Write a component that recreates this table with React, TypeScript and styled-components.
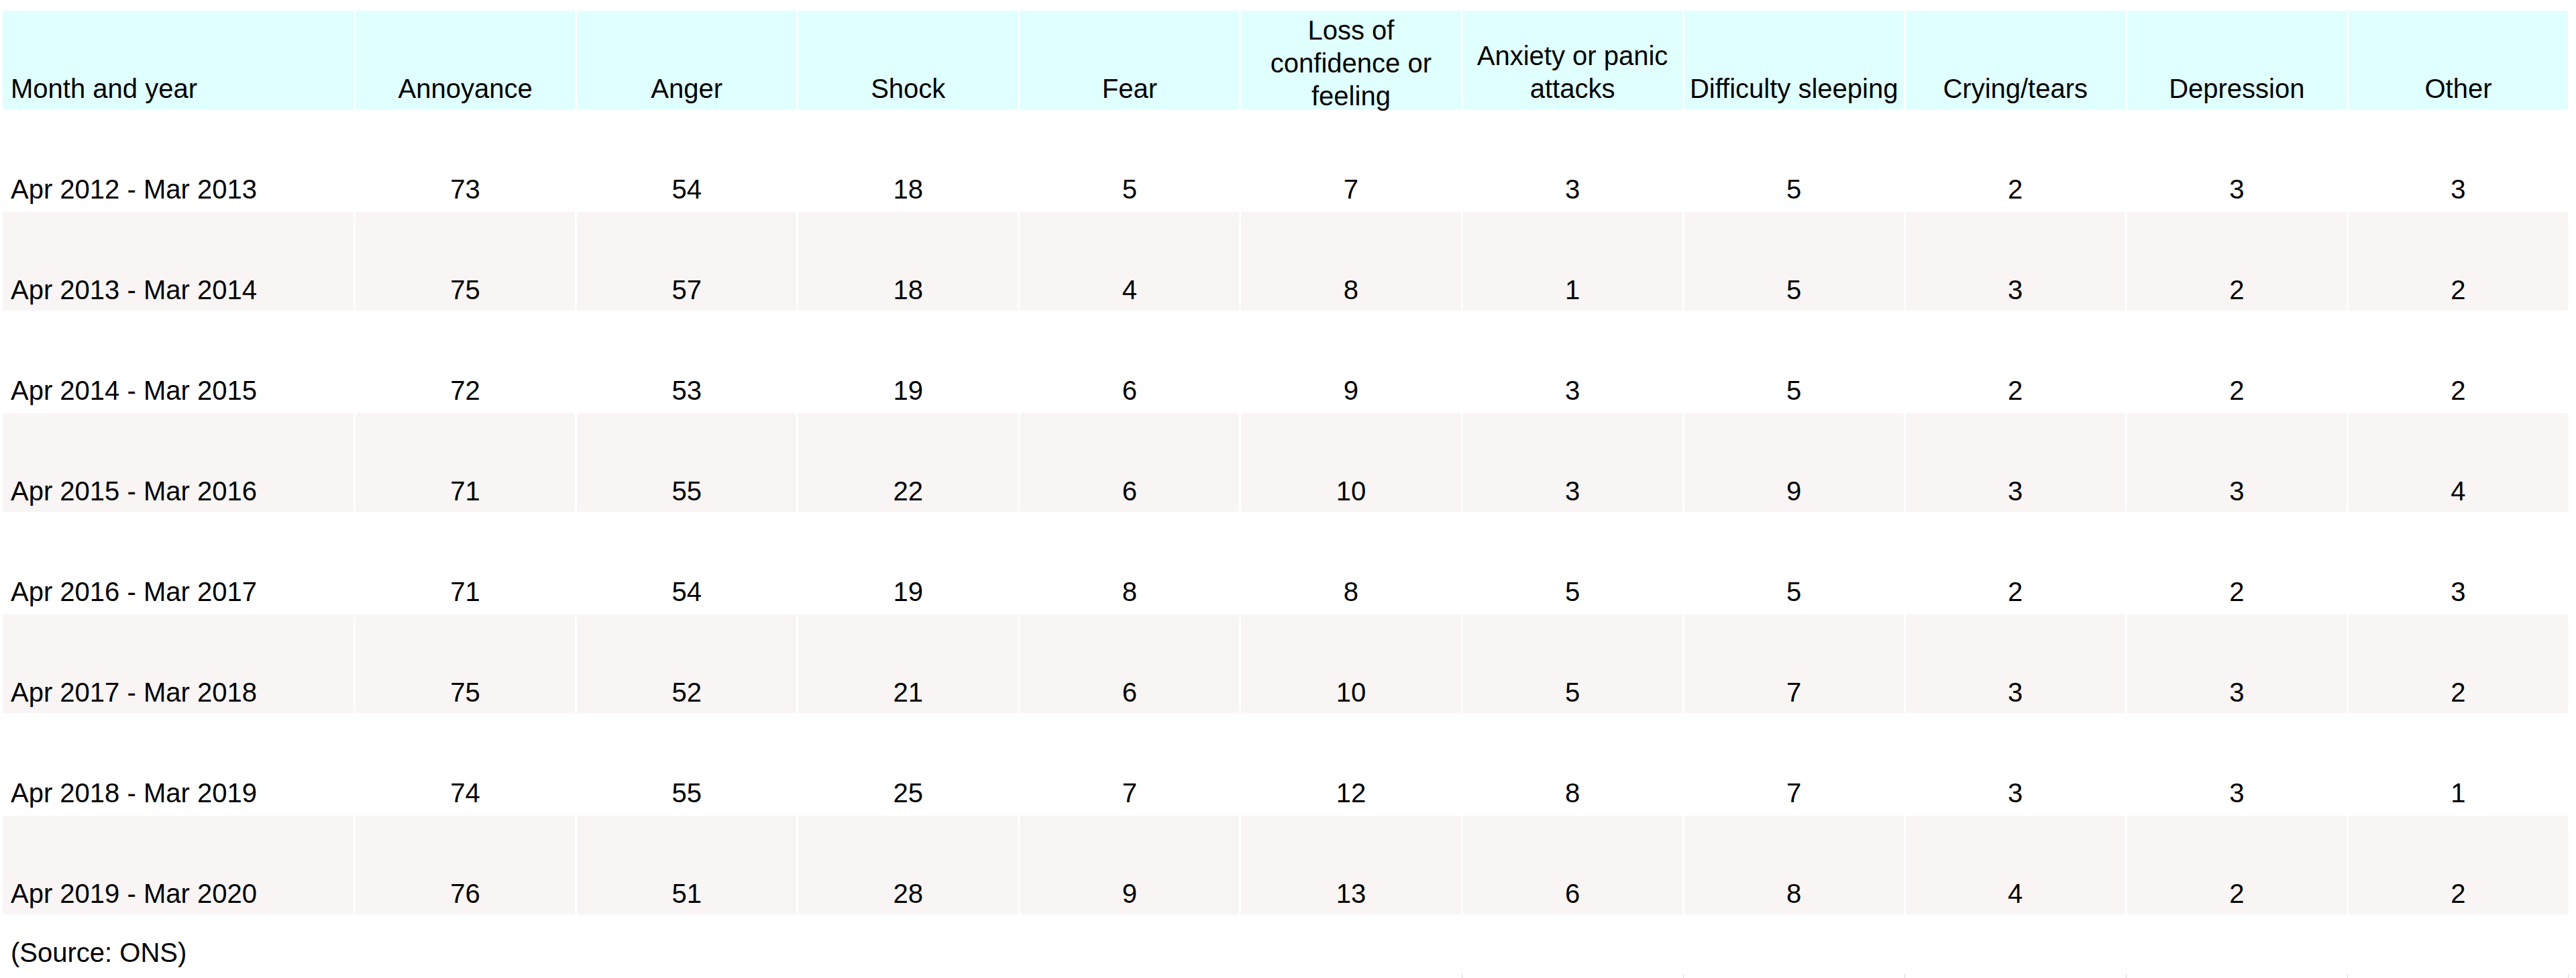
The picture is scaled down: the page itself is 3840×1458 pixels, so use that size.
import styled, { createGlobalStyle } from "styled-components";

const GlobalStyle = createGlobalStyle`
	body {
		margin: 0;
		background: #ffffff;
		color: #000000;
		font-family: "Liberation Sans", Arial, sans-serif;
	}
`;

const columns = [
	"Annoyance",
	"Anger",
	"Shock",
	"Fear",
	"Loss of confidence or feeling",
	"Anxiety or panic attacks",
	"Difficulty sleeping",
	"Crying/tears",
	"Depression",
	"Other",
];

const rows: { period: string; values: number[] }[] = [
	{ period: "Apr 2012 - Mar 2013", values: [73, 54, 18, 5, 7, 3, 5, 2, 3, 3] },
	{ period: "Apr 2013 - Mar 2014", values: [75, 57, 18, 4, 8, 1, 5, 3, 2, 2] },
	{ period: "Apr 2014 - Mar 2015", values: [72, 53, 19, 6, 9, 3, 5, 2, 2, 2] },
	{ period: "Apr 2015 - Mar 2016", values: [71, 55, 22, 6, 10, 3, 9, 3, 3, 4] },
	{ period: "Apr 2016 - Mar 2017", values: [71, 54, 19, 8, 8, 5, 5, 2, 2, 3] },
	{ period: "Apr 2017 - Mar 2018", values: [75, 52, 21, 6, 10, 5, 7, 3, 3, 2] },
	{ period: "Apr 2018 - Mar 2019", values: [74, 55, 25, 7, 12, 8, 7, 3, 3, 1] },
	{ period: "Apr 2019 - Mar 2020", values: [76, 51, 28, 9, 13, 6, 8, 4, 2, 2] },
];

const App = () => {
	return (
		<>
			<GlobalStyle />
			<Page>
				<Table>
					<HeaderRow>
						<HeaderCell $first>
							<CellText>Month and year</CellText>
						</HeaderCell>
						{columns.map((name) => (
							<HeaderCell key={name}>
								<CellText>{name}</CellText>
							</HeaderCell>
						))}
					</HeaderRow>
					{rows.map((row, i) => (
						<DataRow key={row.period}>
							<Cell $first $striped={i % 2 === 1}>
								{row.period}
							</Cell>
							{row.values.map((value, j) => (
								<Cell key={j} $striped={i % 2 === 1}>
									{value}
								</Cell>
							))}
						</DataRow>
					))}
				</Table>
				<Source>(Source: ONS)</Source>
				<NextRow>
					{Array.from({ length: 11 }).map((_, i) => (
						<Tick key={i} $visible={i >= 6} $last={i === 10} />
					))}
				</NextRow>
			</Page>
		</>
	);
};

export default App;

const Page = styled.div`
	padding: 16px 12px 0 4px;
	font-size: 40px;
	line-height: 49px;
`;

const Table = styled.div`
	display: flex;
	flex-direction: column;
	gap: 3px;
`;

const HeaderRow = styled.div`
	display: grid;
	grid-template-columns: 523px repeat(10, minmax(0, 1fr));
	grid-template-rows: 147px;
	column-gap: 3px;
`;

const DataRow = styled(HeaderRow)``;

const HeaderCell = styled.div<{ $first?: boolean }>`
	display: flex;
	flex-direction: column;
	align-items: ${({ $first }) => ($first ? "flex-start" : "center")};
	min-height: 0;
	padding: 5px ${({ $first }) => ($first ? "12px" : "4px")} 6px;
	background: #e0ffff;
	text-align: ${({ $first }) => ($first ? "left" : "center")};
	overflow: visible;
`;

const CellText = styled.span`
	margin-top: auto;
`;

const Cell = styled.div<{ $first?: boolean; $striped?: boolean }>`
	display: flex;
	align-items: flex-end;
	justify-content: ${({ $first }) => ($first ? "flex-start" : "center")};
	padding: 0 ${({ $first }) => ($first ? "12px" : "4px")} 6px;
	background: ${({ $striped }) => ($striped ? "#f8f5f4" : "#ffffff")};
`;

const Source = styled.div`
	padding: 33px 12px 0;
`;

const NextRow = styled.div`
	display: grid;
	grid-template-columns: 523px repeat(10, minmax(0, 1fr));
	column-gap: 3px;
	height: 12px;
	margin-top: 7px;
`;

const Tick = styled.div<{ $visible?: boolean; $last?: boolean }>`
	margin-left: -2px;
	border-left: 1px solid ${({ $visible }) => ($visible ? "#d6d6d6" : "transparent")};
	border-right: 1px solid ${({ $last }) => ($last ? "#d6d6d6" : "transparent")};
	margin-right: ${({ $last }) => ($last ? "-1px" : "0")};
`;
